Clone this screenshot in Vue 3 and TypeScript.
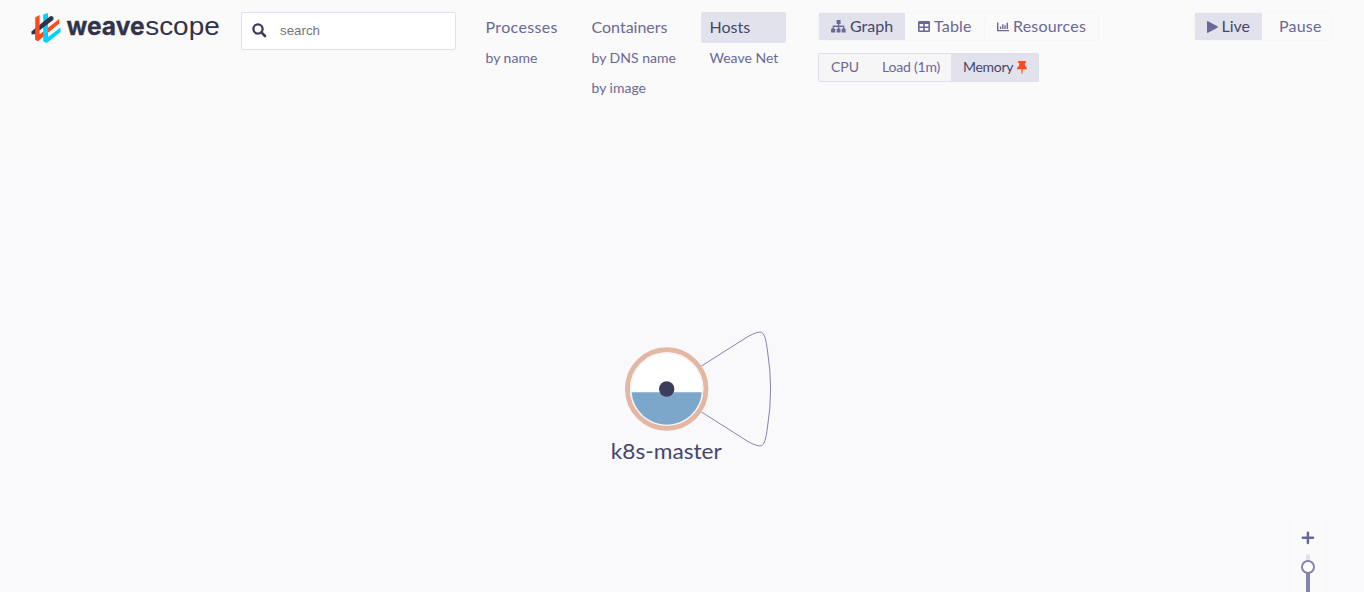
<script setup lang="ts">
interface Topology {
  name: string
  key: string
  active?: boolean
  children: string[]
}

const topologies: Topology[] = [
  { name: 'Processes', key: 'processes', children: ['by name'] },
  { name: 'Containers', key: 'containers', children: ['by DNS name', 'by image'] },
  { name: 'Hosts', key: 'hosts', active: true, children: ['Weave Net'] },
]
</script>

<template>
  <div class="app">
    <header class="header">
      <svg class="logo" width="190" height="38" viewBox="0 0 190 38">
        <path d="M8.4 22.4L28.2 7V11.4L6.9 29.2L4.2 27.4V20z" fill="#ff4b19" />
        <path d="M12.2 2.6L17 1V25L29.5 15.4V20L15.8 31L12.2 29.4z" fill="#00d2ff" />
        <path d="M.4 19.4L18.8 4.6Q20 3.6 21 4.2L22.4 5V7.8L4 22L.6 22.4z" fill="#32324b" />
        <path d="M4.2 5.4L8.6 3V27L6.9 29.2L4.2 27.4z" fill="#ff4b19" />
        <text class="logo-bold" x="35.5" y="23" textLength="78" lengthAdjust="spacingAndGlyphs">weave</text>
        <text class="logo-light" x="114.2" y="23" textLength="74.5" lengthAdjust="spacingAndGlyphs">scope</text>
      </svg>

      <div class="search">
        <svg width="15" height="15" viewBox="0 0 15 15">
          <circle cx="6" cy="6" r="4.6" fill="none" stroke="#3c3c5b" stroke-width="2.3" />
          <path d="M9.4 9.4L13 13" stroke="#3c3c5b" stroke-width="2.7" stroke-linecap="round" />
        </svg>
        <span>search</span>
      </div>

      <nav class="topologies">
        <div v-for="t in topologies" :key="t.key" class="topology" :class="t.key">
          <div class="main" :class="{ active: t.active }"><span>{{ t.name }}</span></div>
          <div v-for="c in t.children" :key="c" class="sub"><span>{{ c }}</span></div>
        </div>
      </nav>

      <div class="modes">
        <div class="switch views">
          <div class="item graph active">
            <svg width="15" height="13" viewBox="0 0 16 13" preserveAspectRatio="none">
              <path d="M6 0h4.2v4H8.8v1.6h4.6q.8 0 .8.8v2h.8q.6 0 .6.6v3q0 .6-.6.6h-3q-.6 0-.6-.6V9q0-.6.6-.6h.9V6.9H8.8v1.5h.8q.5 0 .5.6v3q0 .6-.5.6h-3q-.6 0-.6-.6V9q0-.6.6-.6h.9V6.9H3v1.5h.9q.6 0 .6.6v3q0 .6-.6.6H.7q-.6 0-.6-.6V9q0-.6.6-.6h1v-2q0-.8.8-.8h5V4H6z" fill="#6a6896" />
            </svg>
            <span>Graph</span>
          </div>
          <div class="item table">
            <svg width="12" height="11" viewBox="0 0 12 11">
              <path fill-rule="evenodd" d="M1.2 0h9.6Q12 0 12 1.2v8.6Q12 11 10.8 11H1.2Q0 11 0 9.8V1.2Q0 0 1.2 0zM1.6 3v2.4h3.6V3zM6.8 3v2.4h3.6V3zM1.6 7v2.4h3.6V7zM6.8 7v2.4h3.6V7z" fill="#6a6896" />
            </svg>
            <span>Table</span>
          </div>
          <div class="item resources">
            <svg width="12" height="10" viewBox="0 0 12 10">
              <path d="M.7 .5V8.6H12" fill="none" stroke="#6a6896" stroke-width="1.4" />
              <path d="M3.6 4.5V7M5.8 2.2V7M8 3.2V7M10.3 .8V7" stroke="#6a6896" stroke-width="1.4" />
            </svg>
            <span>Resources</span>
          </div>
        </div>

        <div class="metrics">
          <div class="metric cpu"><span>CPU</span></div>
          <div class="metric load"><span>Load (1m)</span></div>
          <div class="metric memory active">
            <span>Memory</span>
            <svg width="10" height="13" viewBox="0 0 10 13">
              <path d="M1.1 0h7.8v2H7.8l.2 3Q10 6 10 8.2H5.7L5.4 12.8h-.8L4.3 8.2H0Q0 6 2 5l.2-3H1.1z" fill="#ff4b19" />
            </svg>
          </div>
        </div>
      </div>

      <div class="switch time">
        <div class="item live active">
          <svg width="11" height="12" viewBox="0 0 11 12">
            <path d="M0 .9Q0-.3 1.1.3L10.4 5.3q.8.7 0 1.4L1.1 11.7Q0 12.3 0 11.1z" fill="#6a6896" />
          </svg>
          <span>Live</span>
        </div>
        <div class="item pause"><span>Pause</span></div>
      </div>
    </header>

    <svg class="host-node" width="190" height="150" viewBox="600 325 190 150">
      <path d="M701.5 366L748 336.5Q758 331 761.5 332.3Q765.5 333.5 767.5 351Q770.6 370 770.6 389Q770.6 408 767.5 427Q765.5 444.5 761.5 445.7Q758 447 748 441.5L701.5 412" fill="none" stroke="#8583b0" stroke-width="1" />
      <circle cx="666.7" cy="389" r="39.2" fill="#fff" stroke="#e3b7a1" stroke-width="5" />
      <circle cx="666.7" cy="389" r="36" fill="none" stroke="#f4f4f7" stroke-width="1.5" />
      <path d="M631.6 392.2H701.8A35.2 35.2 0 0 1 631.6 392.2z" fill="#7da7ca" />
      <circle cx="666.7" cy="389" r="7.7" fill="#3c3c5b" />
      <text class="node-label" x="610.8" y="459" textLength="111" lengthAdjust="spacingAndGlyphs">k8s-master</text>
    </svg>

    <div class="zoom-control">
      <svg width="32" height="73" viewBox="1292 519 32 73">
        <path d="M1302.8 537.8H1313M1307.9 532.7V542.9" stroke="#6a6896" stroke-width="2.5" stroke-linecap="round" />
        <path d="M1308 556V562" stroke="#e2e2ec" stroke-width="4" stroke-linecap="round" />
        <path d="M1308 567V592" stroke="#8583b0" stroke-width="4" />
        <circle cx="1308" cy="567" r="6" fill="#fff" stroke="#8583b0" stroke-width="2" />
      </svg>
    </div>
  </div>
</template>

<style>
body {
  margin: 0;
  overflow: hidden;
}
</style>

<style scoped>
.app {
  position: relative;
  width: 1364px;
  height: 592px;
  overflow: hidden;
  background: linear-gradient(#fafafa, #f9f9fc 50%);
  color: #6a6896;
  font-family: Lato, "Liberation Sans", sans-serif;
  font-size: 16px;
}
.header {
  display: flex;
  align-items: flex-start;
  padding: 12px 30px 0 31px;
}
.header span {
  white-space: nowrap;
}
.logo {
  flex: none;
  margin-right: 20px;
  overflow: visible;
}
.logo-bold,
.logo-light {
  font-family: Inter, "Liberation Sans", sans-serif;
  font-size: 25px;
  fill: #32324b;
}
.logo-bold {
  font-weight: 700;
  stroke: #32324b;
  stroke-width: 0.3px;
}
.logo-light {
  font-family: "Liberation Sans", sans-serif;
  font-size: 26px;
}
.search {
  display: flex;
  flex: none;
  align-items: center;
  box-sizing: border-box;
  width: 215px;
  height: 38px;
  margin-right: 21px;
  padding: 0 0 2px 10px;
  border: 1px solid #dfdfeb;
  border-radius: 2px;
  background: #fff;
  color: #757575;
  font: 13.333px "Liberation Sans", sans-serif;
}
.search span {
  margin-left: 13px;
}
.topologies {
  display: flex;
  flex: none;
}
.topology {
  flex: none;
}
.processes {
  width: 106px;
}
.containers {
  width: 118px;
}
.hosts {
  width: 85px;
}
.main,
.sub {
  display: flex;
  align-items: center;
  box-sizing: border-box;
  padding: 0 0 2px 8.5px;
}
.main {
  height: 31px;
  padding-bottom: 3px;
  border-radius: 2px;
}
.processes .main {
  letter-spacing: 0.35px;
}
.sub {
  height: 30px;
  font-size: 14px;
}
.active {
  background: #e2e2ec;
  color: #46466a;
}
.modes {
  flex: none;
  width: 281px;
  margin-left: 32px;
}
.switch {
  display: flex;
  box-sizing: border-box;
  height: 29px;
  border: 1px solid #f6f6f8;
  border-radius: 3px;
}
.item {
  display: flex;
  align-items: center;
  box-sizing: border-box;
  padding-left: 12px;
}
.item span,
.metric span {
  padding-bottom: 3px;
}
.item svg,
.metric svg {
  flex: none;
  margin-right: 4px;
}
.graph {
  width: 86px;
}
.table {
  width: 79px;
  padding-left: 13px;
  letter-spacing: 0.15px;
}
.resources {
  width: 114px;
  padding-left: 12px;
  border-left: 1px solid #f6f6f8;
  letter-spacing: 0.2px;
}
.metrics {
  display: flex;
  box-sizing: border-box;
  width: 221px;
  height: 29px;
  margin-top: 12px;
  border: 1px solid #dfdfeb;
  border-radius: 2px;
  background: #f6f6f7;
  font-size: 14px;
}
.metric {
  display: flex;
  align-items: center;
  box-sizing: border-box;
  padding-left: 12px;
}
.cpu {
  width: 51px;
}
.load {
  width: 81px;
}
.load span {
  letter-spacing: -0.2px;
}
.memory {
  flex: 1;
}
.memory span {
  letter-spacing: -0.3px;
}
.memory svg {
  margin: 0 0 0 4px;
}
.time {
  width: 139px;
  margin-left: 95px;
}
.live {
  width: 67px;
}
.live svg {
  margin-right: 3.5px;
}
.pause {
  padding-left: 17px;
  letter-spacing: 0.2px;
}
.host-node {
  position: absolute;
  left: 600px;
  top: 325px;
}
.node-label {
  font-family: Lato, "Liberation Sans", sans-serif;
  font-size: 22px;
  fill: #46466a;
}
.zoom-control {
  position: absolute;
  left: 1292px;
  top: 519px;
  width: 32px;
  height: 73px;
  background: #fafafb;
}
</style>
